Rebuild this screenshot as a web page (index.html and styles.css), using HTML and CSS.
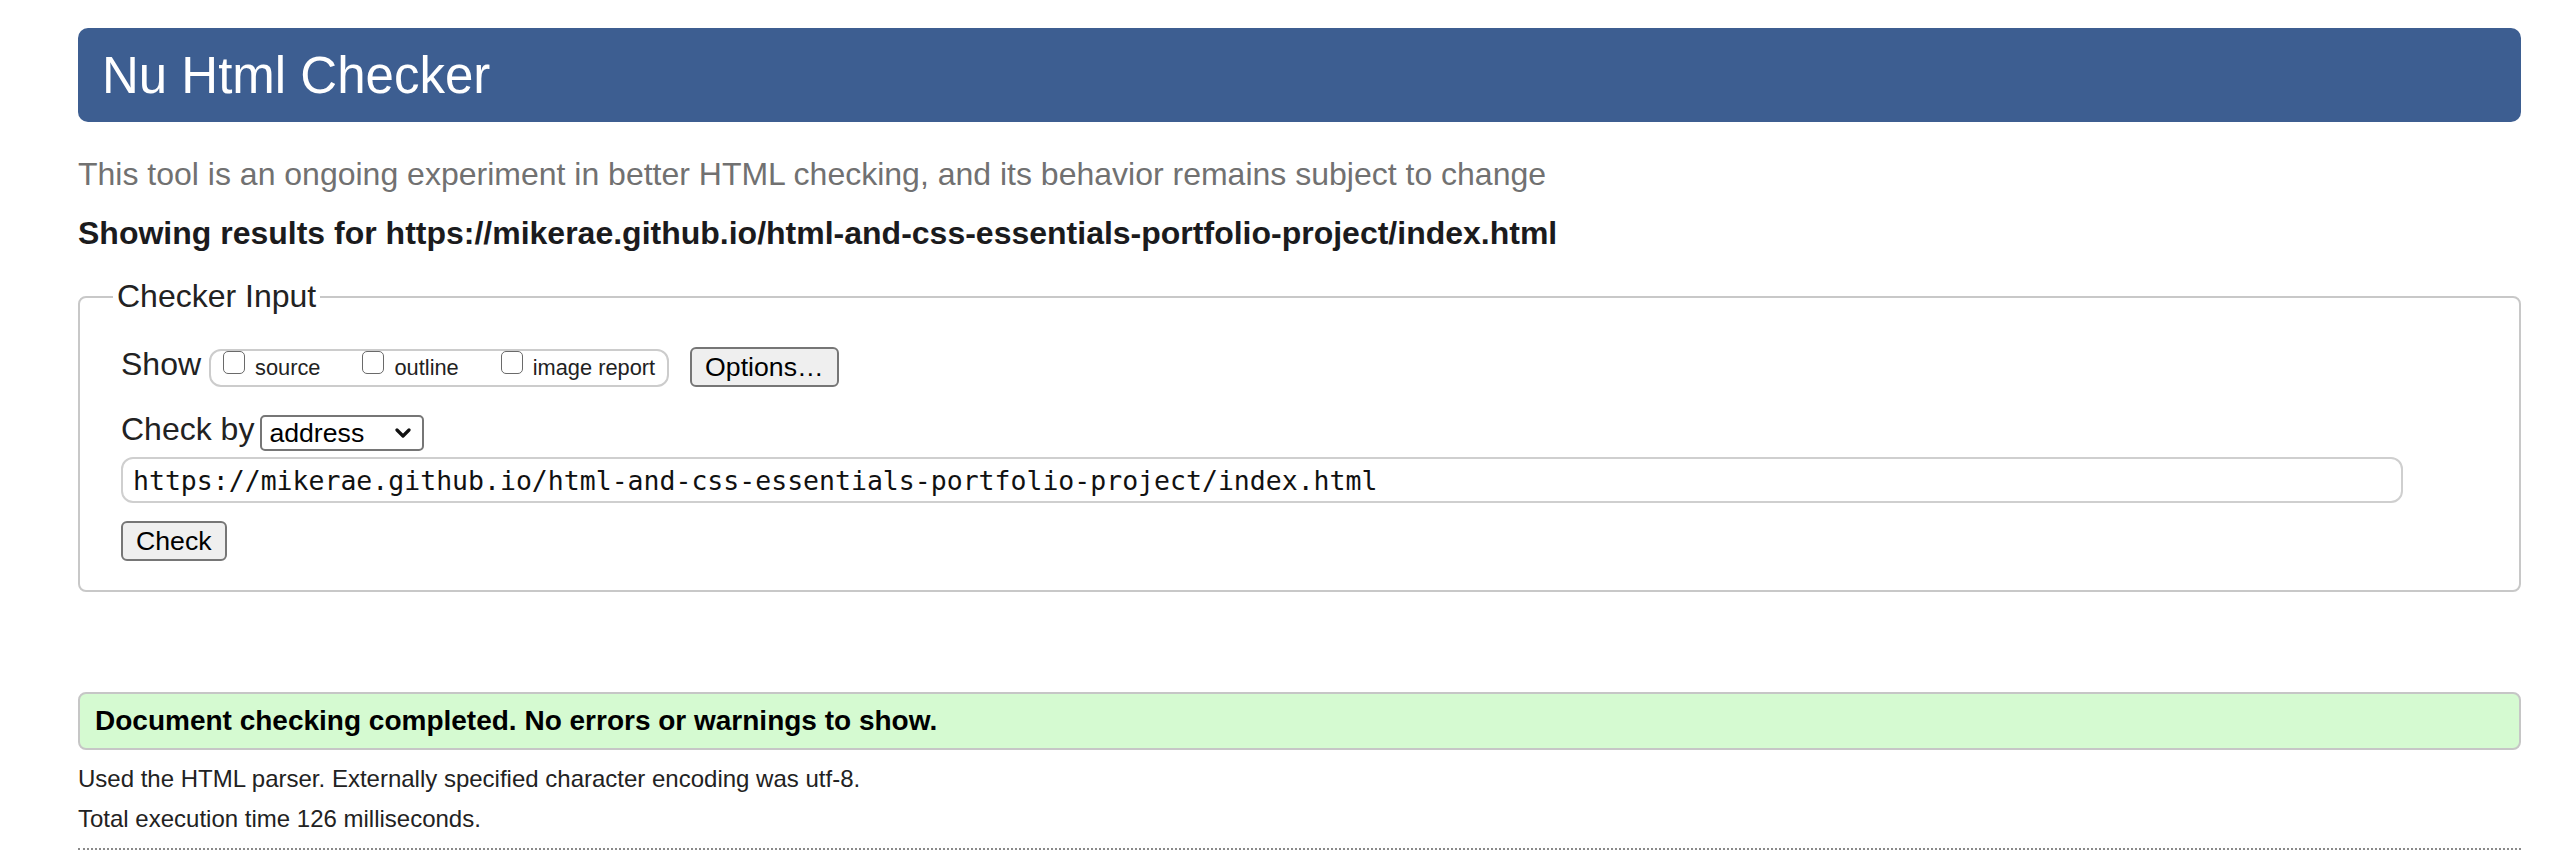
FILE: index.html
```html
<!DOCTYPE html>
<html lang="en">
<head>
<meta charset="utf-8">
<title>Nu Html Checker</title>
<link rel="stylesheet" href="styles.css">
</head>
<body>
<header class="banner"><h1 class="title">Nu Html Checker</h1></header>
<p class="tagline">This tool is an ongoing experiment in better HTML checking, and its behavior remains subject to change</p>
<h2 class="results-for">Showing results for https://mikerae.github.io/html-and-css-essentials-portfolio-project/index.html</h2>
<form class="form">
  <fieldset class="checker">
    <legend class="legend">Checker Input</legend>
    <div class="row row-show">
      <span class="row-label">Show</span>
      <span class="opts">
        <label class="opt"><input type="checkbox" class="cb"><span class="opt-text">source</span></label>
        <label class="opt"><input type="checkbox" class="cb"><span class="opt-text">outline</span></label>
        <label class="opt"><input type="checkbox" class="cb"><span class="opt-text">image report</span></label>
      </span>
      <button type="button" class="btn options">Options…</button>
    </div>
    <div class="row row-by">
      <span class="row-label">Check by</span>
      <span class="select"><span class="select-text">address</span><svg class="chev" width="16" height="11" viewBox="0 0 16 11"><path d="M2 2 L8 8 L14 2" fill="none" stroke="#111" stroke-width="3.2" stroke-linecap="round" stroke-linejoin="round"/></svg></span>
    </div>
    <input class="url" type="text" value="https://mikerae.github.io/html-and-css-essentials-portfolio-project/index.html">
    <button type="button" class="btn check">Check</button>
  </fieldset>
</form>
<div class="success">Document checking completed. No errors or warnings to show.</div>
<p class="meta">Used the HTML parser. Externally specified character encoding was utf-8.</p>
<p class="meta meta-second">Total execution time 126 milliseconds.</p>
<div class="rule"></div>
</body>
</html>
```
FILE: styles.css
```css
html, body {
  background: #ffffff;
}
body {
  margin: 0;
  padding: 28px 43px 0 78px;
  font-family: "Liberation Sans", Arial, sans-serif;
  color: #222222;
}
.banner {
  height: 94px;
  box-sizing: border-box;
  background: #3d5e91;
  border-radius: 10px;
  display: flex;
  align-items: center;
  padding-left: 24px;
}
.title {
  margin: 0;
  font-size: 51px;
  line-height: 59px;
  font-weight: normal;
  color: #ffffff;
}
.tagline {
  margin: 34px 0 0;
  font-size: 32px;
  line-height: 37px;
  color: #717171;
}
.results-for {
  margin: 22px 0 0;
  font-size: 32px;
  line-height: 37px;
  font-weight: bold;
  color: #1b1b1d;
}
.form {
  margin: 0;
}
.checker {
  margin: 26px 0 0;
  padding: 32px 41px 29px;
  border: 2px solid #c8c8c8;
  border-radius: 8px;
  min-width: 0;
}
.legend {
  padding: 0 4px;
  margin-left: -8px;
  font-size: 32px;
  line-height: 37px;
  color: #222222;
}
.row {
  display: flex;
  align-items: flex-start;
}
.row-show {
  height: 40px;
}
.row-label {
  font-size: 32px;
  line-height: 37px;
  margin-top: -1px;
  color: #222222;
  white-space: nowrap;
}
.opts {
  display: flex;
  align-items: flex-start;
  margin-left: 8px;
  margin-top: 2px;
  height: 38px;
  box-sizing: border-box;
  border: 2px solid #cccccc;
  border-radius: 12px;
  padding: 0 12px;
}
.opt {
  display: flex;
  align-items: flex-start;
  margin-right: 42px;
  font-size: 21.8px;
  line-height: 25px;
  color: #222222;
}
.opt:last-child {
  margin-right: 0;
}
.cb {
  appearance: none;
  -webkit-appearance: none;
  width: 22px;
  height: 23px;
  margin: 0 10px 0 0;
  box-sizing: border-box;
  border: 1.5px solid #6a6a6a;
  border-radius: 5px;
  background: #ffffff;
}
.opt-text {
  margin-top: 4px;
  white-space: nowrap;
}
.btn {
  font-family: "Liberation Sans", Arial, sans-serif;
  font-size: 26.67px;
  height: 40px;
  box-sizing: border-box;
  padding: 0 13px;
  margin: 0;
  border: 2px solid #767676;
  border-radius: 6px;
  background: #efefef;
  color: #000000;
  line-height: 36px;
}
.options {
  margin-left: 21px;
}
.row-by {
  margin-top: 28px;
}
.row-by .row-label {
  margin-top: -4px;
}
.select {
  display: flex;
  align-items: center;
  justify-content: space-between;
  margin-left: 6px;
  width: 164px;
  height: 36px;
  box-sizing: border-box;
  border: 2px solid #767676;
  border-radius: 5px;
  padding: 0 11px 0 7px;
  font-size: 26.67px;
  color: #000000;
  background: #ffffff;
}
.chev {
  display: block;
}
.url {
  display: block;
  margin: 6px 0 0;
  width: 2282px;
  height: 46px;
  box-sizing: border-box;
  border: 2px solid #cfcfcf;
  border-radius: 12px;
  padding: 0 10px;
  font-family: "DejaVu Sans Mono", "Liberation Mono", monospace;
  font-size: 26.5px;
  color: #111111;
  background: #ffffff;
  outline: none;
}
.check {
  display: block;
  margin-top: 18px;
}
.success {
  margin-top: 100px;
  height: 58px;
  box-sizing: border-box;
  border: 2px solid #c6c6c6;
  border-radius: 8px;
  background: #d5fad1;
  display: flex;
  align-items: center;
  padding-left: 15px;
  font-size: 28px;
  font-weight: bold;
  color: #000000;
}
.meta {
  margin: 15px 0 0;
  font-size: 24px;
  line-height: 28px;
  color: #222222;
}
.meta-second {
  margin-top: 12px;
}
.rule {
  margin-top: 15px;
  border-top: 2px dotted #8a8a8a;
}
```
